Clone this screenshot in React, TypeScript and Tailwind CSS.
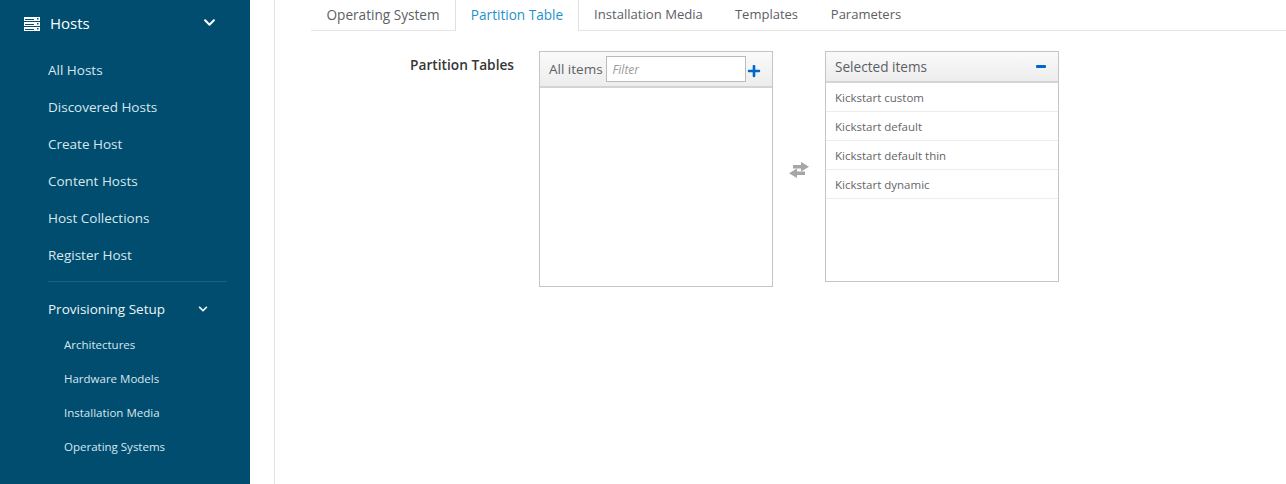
import { FaChevronDown, FaPlus } from "react-icons/fa";

const hostLinks = ["All Hosts", "Discovered Hosts", "Create Host", "Content Hosts", "Host Collections", "Register Host"];
const setupLinks = ["Architectures", "Hardware Models", "Installation Media", "Operating Systems"];
const tabs = [
  { label: "Operating System", width: "w-[144px] text-[13.6px]" },
  { label: "Partition Table", width: "w-[124px] text-[13.6px]" },
  { label: "Installation Media", width: "w-[139px] text-[13.1px]" },
  { label: "Templates", width: "w-[97px] text-[13px]" },
  { label: "Parameters", width: "w-[102px] text-[13px]" },
];
const selected = ["Kickstart custom", "Kickstart default", "Kickstart default thin", "Kickstart dynamic"];

const ServerIcon = () => (
  <svg width="16" height="14" viewBox="0 0 16 14" fill="#fff">
    <path d="M0 0h16v4H0zM0 5h16v4H0zM0 10h16v4H0z" />
    <path d="M1 2h9v1H1zM1 7h9v1H1zM1 12h9v1H1z" fill="#004d6f" />
    <path d="M13 1h1.500v1.500H13zM13 6h1.500v1.500H13zM13 11h1.500v1.500H13z" fill="#004d6f" />
  </svg>
);

const SwapIcon = () => (
  <svg width="22" height="16" viewBox="0 0 22 16" fill="#a6a6a6">
    <path d="M5 3h8V0l8 4.750-8 4.750V6.500H5z" />
    <path d="M17 9.500H9V6.500L1 11.250 9 16v-3h8z" />
  </svg>
);

const App = () => {
  return (
    <div className="flex h-[484px] overflow-hidden bg-white font-['Open_Sans',sans-serif] text-[#5c6065]">
      <aside className="w-[250px] shrink-0 bg-[#004d6f] text-[#d8e7ee]">
        <div className="flex h-[47px] items-center pl-6 pr-[34px] text-white">
          <ServerIcon />
          <span className="ml-[10px] flex-1 text-[15px]">Hosts</span>
          <FaChevronDown className="-mt-[3px] text-[13px]" />
        </div>
        <ul className="mt-[5px] pl-12 text-[13.5px]">
          {hostLinks.map((link) => (
            <li key={link} className="flex h-[37px] items-center">{link}</li>
          ))}
        </ul>
        <div className="mt-[7px] ml-12 mr-[23px] h-px bg-[#0d6486]" />
        <div className="mt-[9px] flex h-[37px] items-center pl-12 pr-[42px] text-[13.5px] text-[#eef5f8]">
          <span className="flex-1">Provisioning Setup</span>
          <FaChevronDown className="-mt-[2px] text-[10px]" />
        </div>
        <ul className="pl-16 text-[11.5px]">
          {setupLinks.map((link) => (
            <li key={link} className="flex h-[34px] items-center">{link}</li>
          ))}
        </ul>
      </aside>

      <div className="ml-6 w-px shrink-0 bg-[#e3e3e3]" />

      <main className="flex-1 pl-9">
        <nav className="flex h-[31px] border-b border-[#e5e5e5]">
          {tabs.map((tab) => (
            <div
              key={tab.label}
              className={
                tab.label === "Partition Table"
                  ? `-mb-px flex h-[31px] items-center justify-center border-x border-[#e0e0e0] bg-white text-[#1f93c9] ${tab.width}`
                  : `flex h-[30px] items-center justify-center ${tab.width}`
              }
            >
              {tab.label}
            </div>
          ))}
        </nav>

        <div className="mt-5 flex items-start">
          <div className="mt-[4px] w-[203px] text-right text-[13.7px] font-semibold text-[#363636]">Partition Tables</div>

          <section className="ml-[25px] h-[236px] w-[234px] border border-[#c4c4c4]">
            <header className="flex h-9 items-center border-b-2 border-[#d4d4d4] bg-gradient-to-b from-[#fafafa] to-[#ededed] pl-[9px] text-[13.5px]">
              <span className="pt-px">All items</span>
              <div className="ml-[3px] flex h-[26px] w-[140px] items-center border border-[#bbb] bg-white pl-[6px] pt-[2px] text-[12px] italic text-[#999]">
                Filter
              </div>
              <FaPlus className="ml-px mt-[3px] text-[14px] text-[#0066cc]" />
            </header>
          </section>

          <div className="flex w-[52px] justify-center pt-[111px]">
            <SwapIcon />
          </div>

          <section className="h-[231px] w-[234px] border border-[#c4c4c4]">
            <header className="flex h-[31px] items-center justify-between border-b-2 border-[#d4d4d4] bg-gradient-to-b from-[#fafafa] to-[#ededed] pl-[9px] pr-[12px] text-[13.6px]">
              <span className="pt-px">Selected items</span>
              <span className="h-[3px] w-[10px] rounded-[1px] bg-[#0066cc]" />
            </header>
            <ul className="text-[11.5px] text-[#666]">
              {selected.map((item) => (
                <li key={item} className="flex h-[29px] items-center border-b border-[#ececec] pl-[9px] pt-[2px]">{item}</li>
              ))}
            </ul>
          </section>
        </div>
      </main>
    </div>
  );
};

export default App;
